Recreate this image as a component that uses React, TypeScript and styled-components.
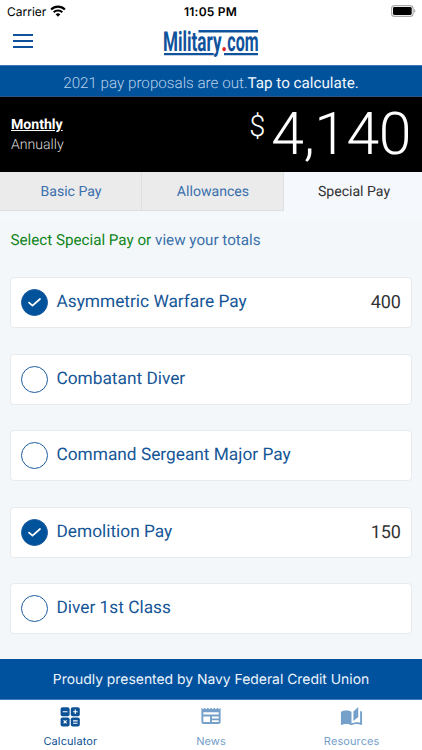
import React from "react";
import styled, { createGlobalStyle } from "styled-components";

const GlobalStyle = createGlobalStyle`
  * { box-sizing: border-box; }
  body { margin: 0; background: #fff; }
`;

const Screen = styled.div`
  width: 422px;
  height: 750px;
  display: flex;
  flex-direction: column;
  overflow: hidden;
  background: #f3f7fa;
  font-family: Roboto, sans-serif;
  text-rendering: geometricPrecision;
`;

const StatusBar = styled.div`
  height: 22px;
  flex: none;
  display: grid;
  grid-template-columns: 1fr auto 1fr;
  align-items: center;
  padding: 0 6px 0 7px;
  background: #fff;
  color: #000;
  font-family: Inter, sans-serif;
  font-size: 12px;
`;

const Carrier = styled.div`
  display: flex;
  align-items: center;
  gap: 4px;
`;

const Clock = styled.div`
  padding-right: 2px;
  font-weight: 600;
  letter-spacing: 0.2px;
`;

const Battery = styled.div`
  display: flex;
  justify-content: flex-end;
  padding-bottom: 1px;
`;

const Header = styled.header`
  height: 43px;
  flex: none;
  display: grid;
  grid-template-columns: 1fr 96px 1fr;
  padding: 0 13px;
  background: #fff;
`;

const MenuButton = styled.button`
  width: 20px;
  height: 14px;
  margin-top: 12px;
  padding: 0;
  border: 0;
  background: none;
  display: flex;
  flex-direction: column;
  justify-content: space-between;
  align-items: stretch;
`;

const MenuLine = styled.span`
  height: 2px;
  background: #0d529b;
`;

const Promo = styled.div`
  height: 32px;
  flex: none;
  display: flex;
  align-items: center;
  justify-content: center;
  padding-top: 3px;
  border-top: 1px solid #3b77b4;
  border-bottom: 1px solid #2b5682;
  background: #00529b;
  color: #b8d0ea;
  font-size: 15.2px;
  font-weight: 300;
`;

const PromoAction = styled.span`
  color: #f1f6fb;
  font-weight: 400;
`;

const Summary = styled.section`
  height: 75px;
  flex: none;
  display: flex;
  justify-content: space-between;
  padding: 19px 11px 0;
  background: #000;
`;

const Period = styled.div<{ $active?: boolean }>`
  height: 19.5px;
  line-height: 19px;
  font-size: 14.1px;
  font-weight: ${(p) => (p.$active ? 700 : 300)};
  color: ${(p) => (p.$active ? "#fff" : "#ddd")};
  text-decoration: ${(p) => (p.$active ? "underline" : "none")};
`;

const Total = styled.div`
  display: flex;
  align-items: flex-start;
  gap: 6px;
  color: #fff;
  font-weight: 300;
`;

const Currency = styled.span`
  font-size: 29px;
  line-height: 30px;
  margin-top: -4px;
`;

const Amount = styled.span`
  font-size: 59px;
  line-height: 60px;
  margin-top: -11px;
  letter-spacing: -0.5px;
`;

const Tabs = styled.nav`
  height: 40px;
  flex: none;
  display: grid;
  grid-template-columns: 142px 142px 138px;
  align-items: start;
`;

const Tab = styled.div<{ $active?: boolean }>`
  height: 39px;
  display: flex;
  align-items: center;
  justify-content: center;
  padding-top: 1px;
  padding-left: ${(p) => (p.$active ? "3px" : "1px")};
  font-size: 14.1px;
  color: ${(p) => (p.$active ? "#333" : "#3a70ad")};
  background: ${(p) => (p.$active ? "#f5f8fc" : "#ebebec")};
  border-right: 1px solid ${(p) => (p.$active ? "transparent" : "#dddfe1")};
  border-bottom: 1px solid ${(p) => (p.$active ? "transparent" : "#dddfe1")};
`;

const Content = styled.main`
  flex: 1;
  min-height: 0;
  padding: 18px 10px 0;
  overflow: hidden;
  background: linear-gradient(#f6f9fc 0, #f3f7fa 16px);
`;

const Prompt = styled.div`
  height: 20px;
  padding-left: 0.4px;
  line-height: 20px;
  font-size: 15.2px;
  color: #10851a;
`;

const TotalsLink = styled.span`
  color: #3970a9;
`;

const List = styled.div`
  display: grid;
  gap: 25.4px;
  margin-top: 27.4px;
`;

const Card = styled.div`
  height: 51px;
  display: flex;
  align-items: center;
  padding: 0 10px;
  border: 1px solid #e8ebee;
  border-radius: 4px;
  background: #fff;
`;

const Check = styled.span<{ $on: boolean }>`
  width: 27px;
  height: 27px;
  display: flex;
  align-items: center;
  justify-content: center;
  border: 1px solid #1c5c9f;
  border-radius: 50%;
  background: ${(p) => (p.$on ? "#00529b" : "#fff")};
`;

const CardName = styled.span`
  flex: 1;
  margin: -1px 0 0 8.5px;
  font-size: 17.3px;
  color: #165697;
`;

const CardValue = styled.span`
  font-size: 18px;
  color: #333;
`;

const Sponsor = styled.div`
  height: 41px;
  flex: none;
  display: flex;
  align-items: center;
  justify-content: center;
  padding-top: 1px;
  border-bottom: 1px solid #3f7ebb;
  background: #00529f;
  color: #edf4fb;
  font-family: Inter, sans-serif;
  font-size: 13.9px;
`;

const BottomNav = styled.nav`
  height: 50px;
  flex: none;
  display: grid;
  grid-template-columns: repeat(3, 1fr);
  background: #fff;
`;

const NavItem = styled.div<{ $active?: boolean }>`
  display: flex;
  flex-direction: column;
  align-items: center;
  padding-top: 5px;
  gap: 5px;
  color: ${(p) => (p.$active ? "#0d5296" : "#75a0ca")};
  font-family: Inter, sans-serif;
  font-size: 11px;
  line-height: 14px;
  letter-spacing: 0.1px;
`;

const WifiIcon = () => (
  <svg width="16" height="12" viewBox="0 0 16 12">
    <g fill="none" stroke="#000" strokeWidth="2.1">
      <path d="M1.1 4.5a9.8 9.8 0 0 1 13.8 0" />
      <path d="M3.7 7.2a6.1 6.1 0 0 1 8.6 0" />
    </g>
    <path d="M8 11.7 5.6 9.3a3.5 3.5 0 0 1 4.8 0z" />
  </svg>
);

const BatteryIcon = () => (
  <svg width="25" height="12" viewBox="0 0 25 12">
    <rect x="0.6" y="0.6" width="21.5" height="10.8" rx="3" fill="#fff" stroke="#aaa" strokeWidth="1.1" />
    <rect x="2" y="2" width="18.7" height="8" rx="1.4" />
    <path d="M23.2 4.1c1.5.5 1.5 3.3 0 3.8z" fill="#999" />
  </svg>
);

const LogoText = styled.text`
  font-family: Roboto, sans-serif;
  font-weight: 700;
  font-size: 27.5px;
  stroke: #fff;
  stroke-width: 1px;
  paint-order: stroke;
`;

const Logo = () => (
  <svg width="96" height="43" viewBox="0 0 96 43" overflow="visible">
    <path d="M35.5 8H95v2.4H35.5zM1 31h50v2.3H1zM61 31h34v2.3H61z" fill="#10529b" />
    <LogoText x="0" y="28.6" textLength="58.5" lengthAdjust="spacingAndGlyphs" fill="#10529b">
      Military
    </LogoText>
    <LogoText x="58" y="28.6" textLength="6.5" lengthAdjust="spacingAndGlyphs" fill="#e21f2c">
      .
    </LogoText>
    <LogoText x="64.3" y="28.6" textLength="31.2" lengthAdjust="spacingAndGlyphs" fill="#10529b">
      com
    </LogoText>
  </svg>
);

const Tick = () => (
  <svg width="13" height="9" viewBox="0 0 13 9">
    <path d="M1 4.6 4.5 7.7 12 1" fill="none" stroke="#fff" strokeWidth="1.7" strokeLinecap="round" strokeLinejoin="round" />
  </svg>
);

const CalculatorIcon = () => (
  <svg width="24" height="24" viewBox="0 0 24 24">
    <g fill="currentColor">
      <rect x="2.6" y="2.2" width="9" height="9" rx="1.9" />
      <rect x="12.8" y="2.2" width="9" height="9" rx="1.9" />
      <rect x="2.6" y="12.4" width="9" height="9" rx="1.9" />
      <rect x="12.8" y="12.4" width="9" height="9" rx="1.9" />
    </g>
    <path
      d="M4.8 6.7h4.6M15 6.7h4.6M17.3 4.4V9M5.6 15.4l3 3M8.6 15.4l-3 3M15 15.9h4.6M15 18.2h4.6"
      stroke="#fff"
      strokeWidth="1.15"
    />
  </svg>
);

const NewsIcon = () => (
  <svg width="24" height="24" viewBox="0 0 24 24">
    <path
      fill="currentColor"
      fillRule="evenodd"
      d="M2.4 2.8 4 4.2l1.6-1.4 1.6 1.4 1.6-1.4 1.6 1.4L12 2.8l1.6 1.4 1.6-1.4 1.6 1.4 1.6-1.4L20 4.2l1.6-1.4V17q0 2-2 2H4.4q-2 0-2-2zM4.3 7.3v2.2h15.4V7.3zM4.3 11.4v5.7H11v-5.7zM12.9 11.4v2h6.8v-2zM12.9 15.2v1.9h6.8v-1.9z"
    />
  </svg>
);

const ResourcesIcon = () => (
  <svg width="23" height="24" viewBox="0 0 24 24" preserveAspectRatio="none">
    <path
      transform="translate(0 1.6) scale(1 .87)"
      fill="currentColor"
      d="M19 .5l-5 5v11l5-4.5V.5zM1 6v14.65c0 .25.25.5.5.5.1 0 .15-.05.25-.05C3.1 20.45 5.05 20 6.5 20c1.95 0 4.05.4 5.5 1.5V6c-1.45-1.1-3.55-1.5-5.5-1.5S2.45 4.9 1 6zm22 13.5V6c-.6-.45-1.25-.75-2-1v13.5c-1.1-.35-2.3-.5-3.5-.5-1.7 0-4.15.65-5.5 1.5v2c1.35-.85 3.8-1.5 5.5-1.5 1.65 0 3.35.3 4.75 1.05.1.05.15.05.25.05.25 0 .5-.25.5-.5v-1.1z"
    />
  </svg>
);

const pays = [
  { name: "Asymmetric Warfare Pay", value: 400 },
  { name: "Combatant Diver" },
  { name: "Command Sergeant Major Pay" },
  { name: "Demolition Pay", value: 150 },
  { name: "Diver 1st Class" },
];

export default function App() {
  return (
    <>
      <GlobalStyle />
      <Screen>
        <StatusBar>
          <Carrier>
            Carrier <WifiIcon />
          </Carrier>
          <Clock>11:05 PM</Clock>
          <Battery>
            <BatteryIcon />
          </Battery>
        </StatusBar>
        <Header>
          <MenuButton aria-label="Menu">
            <MenuLine />
            <MenuLine />
            <MenuLine />
          </MenuButton>
          <Logo />
        </Header>
        <Promo>
          <span>
            2021 pay proposals are out.<PromoAction>Tap to calculate.</PromoAction>
          </span>
        </Promo>
        <Summary>
          <div>
            <Period $active>Monthly</Period>
            <Period>Annually</Period>
          </div>
          <Total>
            <Currency>$</Currency>
            <Amount>4,140</Amount>
          </Total>
        </Summary>
        <Tabs>
          <Tab>Basic Pay</Tab>
          <Tab>Allowances</Tab>
          <Tab $active>Special Pay</Tab>
        </Tabs>
        <Content>
          <Prompt>
            Select Special Pay or <TotalsLink>view your totals</TotalsLink>
          </Prompt>
          <List>
            {pays.map((pay) => (
              <Card key={pay.name}>
                <Check $on={pay.value !== undefined}>{pay.value !== undefined && <Tick />}</Check>
                <CardName>{pay.name}</CardName>
                {pay.value !== undefined && <CardValue>{pay.value}</CardValue>}
              </Card>
            ))}
          </List>
        </Content>
        <Sponsor>Proudly presented by Navy Federal Credit Union</Sponsor>
        <BottomNav>
          <NavItem $active>
            <CalculatorIcon />
            Calculator
          </NavItem>
          <NavItem>
            <NewsIcon />
            News
          </NavItem>
          <NavItem>
            <ResourcesIcon />
            Resources
          </NavItem>
        </BottomNav>
      </Screen>
    </>
  );
}
